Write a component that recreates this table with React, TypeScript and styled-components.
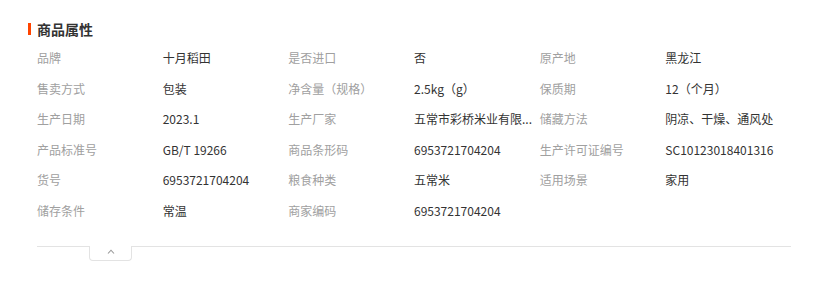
import React from "react";
import styled, { createGlobalStyle } from "styled-components";

const GlobalStyle = createGlobalStyle`
  html, body {
    margin: 0;
    padding: 0;
    background: #fff;
  }
  body {
    font-family: "Noto Sans CJK SC", "Liberation Sans", sans-serif;
    color: #333;
  }
`;

interface AttrType {
  label: string;
  value: string;
}

const attrs: AttrType[] = [
  { label: "品牌", value: "十月稻田" },
  { label: "是否进口", value: "否" },
  { label: "原产地", value: "黑龙江" },
  { label: "售卖方式", value: "包装" },
  { label: "净含量（规格）", value: "2.5kg（g）" },
  { label: "保质期", value: "12（个月）" },
  { label: "生产日期", value: "2023.1" },
  { label: "生产厂家", value: "五常市彩桥米业有限..." },
  { label: "储藏方法", value: "阴凉、干燥、通风处" },
  { label: "产品标准号", value: "GB/T 19266" },
  { label: "商品条形码", value: "6953721704204" },
  { label: "生产许可证编号", value: "SC10123018401316" },
  { label: "货号", value: "6953721704204" },
  { label: "粮食种类", value: "五常米" },
  { label: "适用场景", value: "家用" },
  { label: "储存条件", value: "常温" },
  { label: "商家编码", value: "6953721704204" },
];

const Section = styled.section`
  padding-top: 20px;
  width: 817px;
`;

const Header = styled.div`
  display: flex;
  align-items: center;
  gap: 6px;
  padding-left: 28px;
  height: 18px;
`;

const Mark = styled.span`
  width: 3px;
  height: 12px;
  background: #ff4400;
`;

const Title = styled.h3`
  margin: 0;
  font-size: 14px;
  font-weight: 700;
  line-height: 18px;
  color: #333;
`;

const Grid = styled.div`
  display: grid;
  grid-template-columns: repeat(6, 1fr);
  grid-auto-rows: 30.6px;
  width: 754px;
  margin: 4.2px 0 0 37px;
`;

const Cell = styled.div<{ muted?: boolean }>`
  display: flex;
  align-items: center;
  padding-right: 4px;
  min-width: 0;
  font-size: 12px;
  white-space: nowrap;
  color: ${props => (props.muted ? "#a0a0a0" : "#333")};
`;

const Divider = styled.div`
  display: flex;
  width: 754px;
  margin: 20.7px 0 0 37px;
`;

const Line = styled.div<{ width?: number }>`
  border-top: 1px solid #e3e3e3;
  height: 0;
  ${props => (props.width ? `width: ${props.width}px;` : "flex: 1;")}
`;

const Toggle = styled.button`
  box-sizing: border-box;
  width: 43px;
  height: 15px;
  padding: 3px 0 0;
  margin: 0;
  display: flex;
  justify-content: center;
  align-items: flex-start;
  background: #fff;
  border: 1px solid #e3e3e3;
  border-top: none;
  border-radius: 0 0 4px 4px;
  cursor: pointer;
`;

export default function App() {
  return (
    <>
      <GlobalStyle />
      <Section>
        <Header>
          <Mark />
          <Title>商品属性</Title>
        </Header>
        <Grid>
          {attrs.map(item => (
            <React.Fragment key={item.label}>
              <Cell muted>{item.label}</Cell>
              <Cell>{item.value}</Cell>
            </React.Fragment>
          ))}
        </Grid>
        <Divider>
          <Line width={52} />
          <Toggle aria-label="收起">
            <svg width="8" height="5" viewBox="0 0 8 5">
              <polyline
                points="1,4.5 4,1.2 7,4.5"
                fill="none"
                stroke="#999"
                strokeWidth="1.1"
              />
            </svg>
          </Toggle>
          <Line />
        </Divider>
      </Section>
    </>
  );
}
